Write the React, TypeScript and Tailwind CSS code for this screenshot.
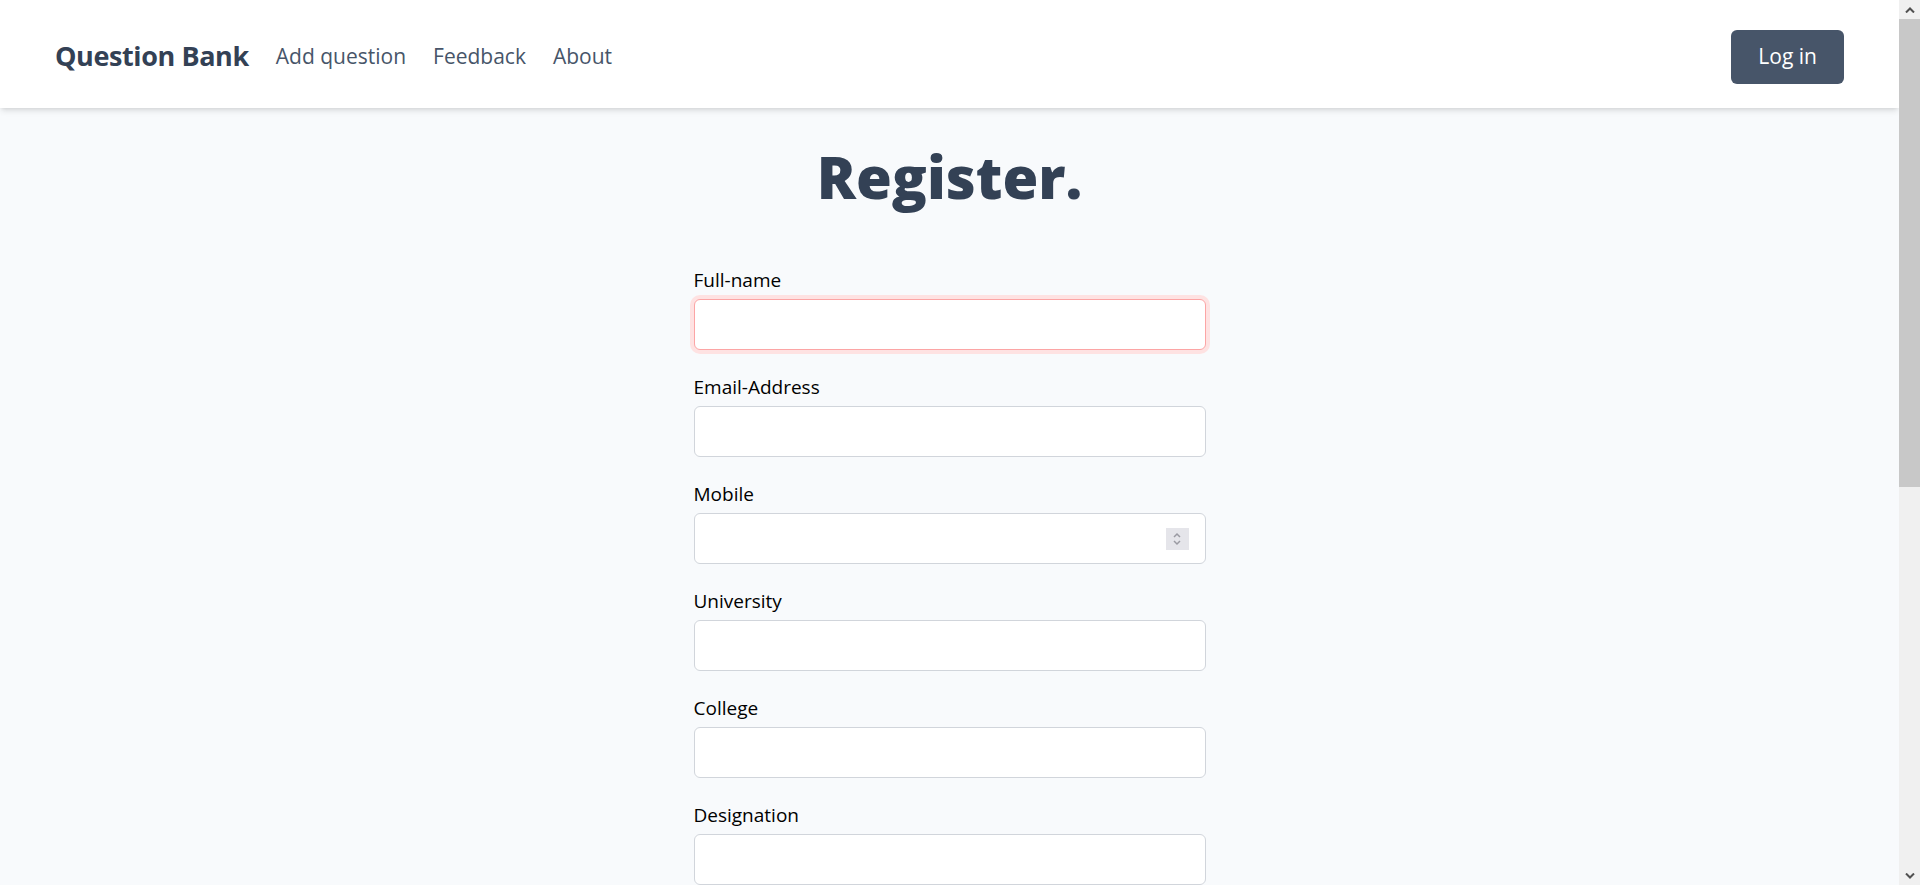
import { useState } from 'react'

const fields = [
  { name: 'fullname', label: 'Full-name', type: 'text' },
  { name: 'email', label: 'Email-Address', type: 'email' },
  { name: 'mobile', label: 'Mobile', type: 'number' },
  { name: 'university', label: 'University', type: 'text' },
  { name: 'college', label: 'College', type: 'text' },
  { name: 'designation', label: 'Designation', type: 'text' },
  { name: 'department', label: 'Department', type: 'text' },
  { name: 'password', label: 'Password', type: 'password' },
  { name: 'confirm', label: 'Confirm-Password', type: 'password' },
]

const Chevron = ({ up }: { up?: boolean }) => (
  <svg width="10" height="6" viewBox="0 0 10 6" fill="none" stroke="#505050" strokeWidth="2" strokeLinejoin="miter">
    {up ? <path d="M1 5.5 L5 1.5 L9 5.5" /> : <path d="M1 0.5 L5 4.5 L9 0.5" />}
  </svg>
)

const Register = () => {
  const [values, setValues] = useState<Record<string, string>>({})

  return (
    <div className="h-screen flex overflow-hidden font-['Segoe_UI','Open_Sans',sans-serif]">
      <div className="flex-1 min-w-0 overflow-hidden bg-[#f8fafc]">
        {/* navbar */}
        <nav className="h-[108px] bg-white shadow-md flex items-center justify-between px-[55px] pt-[5px] relative z-10">
          <div className="flex items-center gap-[27px]">
            <a href="#" className="text-[27px] font-bold text-[#334155] tracking-[-0.4px]">Question Bank</a>
            <a href="#" className="text-[21px] text-[#475569]">Add question</a>
            <a href="#" className="text-[21px] text-[#475569]">Feedback</a>
            <a href="#" className="text-[21px] text-[#475569]">About</a>
          </div>
          <button className="h-[54px] px-[27px] rounded-md bg-[#475569] text-white text-[21px]">Log in</button>
        </nav>

        {/* form */}
        <div className="w-[512px] mx-auto pt-[40px] pb-[260px]">
          <h1 className="text-center text-[58px] font-extrabold text-[#334155] leading-none mb-[60px]">Register.</h1>
          <form onSubmit={e => e.preventDefault()}>
            {fields.map((f, i) => (
              <div key={f.name} className="mb-[23px]">
                <label htmlFor={f.name} className="block text-[19px] leading-[28px] text-black mb-[5px]">{f.label}</label>
                <div className="relative">
                  <input
                    id={f.name}
                    type={f.type}
                    value={values[f.name] || ''}
                    onChange={e => setValues({ ...values, [f.name]: e.target.value })}
                    className={`block w-full h-[51px] rounded-md bg-white px-3 outline-none ${
                      i === 0 ? 'border border-[#fca5a5] ring-4 ring-[#fee2e2]' : 'border border-[#d1d5db]'
                    }`}
                  />
                  {f.type === 'number' && (
                    <div className="absolute right-[17px] top-1/2 -translate-y-1/2 w-[23px] h-[22px] bg-[#e5e5ea] flex items-center justify-center">
                      <svg width="10" height="14" viewBox="0 0 10 14" fill="none" stroke="#9a9aa2" strokeWidth="1.5">
                        <path d="M2 5 L5 2 L8 5" />
                        <path d="M2 9 L5 12 L8 9" />
                      </svg>
                    </div>
                  )}
                </div>
              </div>
            ))}
            <button type="submit" className="w-full h-[54px] rounded-md bg-[#475569] text-white text-[21px] mt-2">Register</button>
          </form>
        </div>
      </div>

      {/* window scrollbar */}
      <div className="w-[21px] shrink-0 bg-[#f0f0f0] flex flex-col">
        <div className="h-[19px] flex items-center justify-center"><Chevron up /></div>
        <div className="h-[468px] bg-[#c8c8c8]" />
        <div className="flex-1" />
        <div className="h-[19px] flex items-center justify-center"><Chevron /></div>
      </div>
    </div>
  )
}

export default Register
